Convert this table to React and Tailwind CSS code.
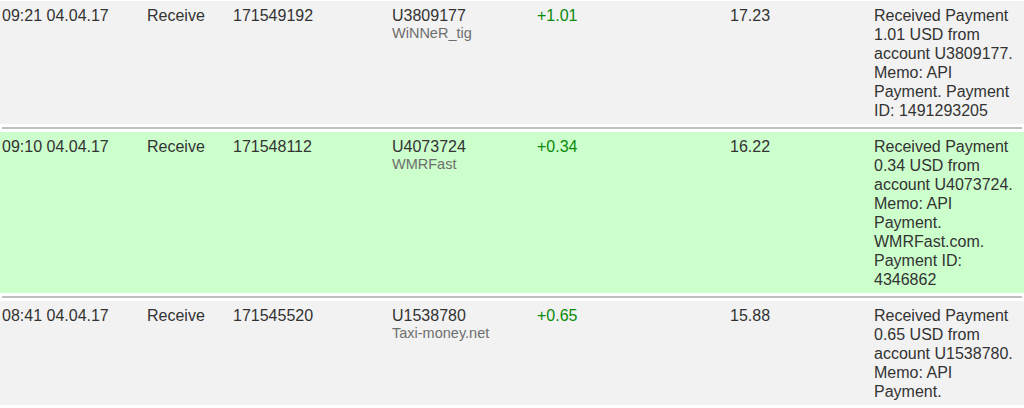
import React from "react";

const rows = [
  {
    time: "09:21 04.04.17",
    type: "Receive",
    id: "171549192",
    acc: "U3809177",
    name: "WiNNeR_tig",
    amount: "+1.01",
    balance: "17.23",
    desc: "Received Payment 1.01 USD from account U3809177. Memo: API Payment. Payment ID: 1491293205",
    bg: "bg-[#f2f2f2]",
  },
  {
    time: "09:10 04.04.17",
    type: "Receive",
    id: "171548112",
    acc: "U4073724",
    name: "WMRFast",
    amount: "+0.34",
    balance: "16.22",
    desc: "Received Payment 0.34 USD from account U4073724. Memo: API Payment. WMRFast.com. Payment ID: 4346862",
    bg: "bg-[#ccffcc]",
  },
  {
    time: "08:41 04.04.17",
    type: "Receive",
    id: "171545520",
    acc: "U1538780",
    name: "Taxi-money.net",
    amount: "+0.65",
    balance: "15.88",
    desc: "Received Payment 0.65 USD from account U1538780. Memo: API Payment.",
    bg: "bg-[#f2f2f2]",
  },
];

export default function App() {
  return (
    <div
      className="w-[1024px] h-[408px] overflow-hidden bg-white pt-[1px] text-[16px] leading-[19px] text-[#333333]"
      style={{ fontFamily: '"Liberation Sans", Arial, sans-serif' }}
    >
      {rows.map((r, i) => (
        <div key={i}>
          {i > 0 && <div className="mx-[2px] my-[3px] h-[2px] bg-[#c0c0c0]" />}
          <div
            className={`${r.bg} grid grid-cols-[145px_86px_159px_145px_193px_144px_148px] px-[2px] pt-[5px] pb-[4px]`}
          >
            <div>{r.time}</div>
            <div>{r.type}</div>
            <div>{r.id}</div>
            <div>
              <div>{r.acc}</div>
              <div className="text-[14.5px] leading-[17px] text-[#6e6e6e]">{r.name}</div>
            </div>
            <div className="text-[#0a8a0a]">{r.amount}</div>
            <div>{r.balance}</div>
            <div>{r.desc}</div>
          </div>
        </div>
      ))}
    </div>
  );
}
